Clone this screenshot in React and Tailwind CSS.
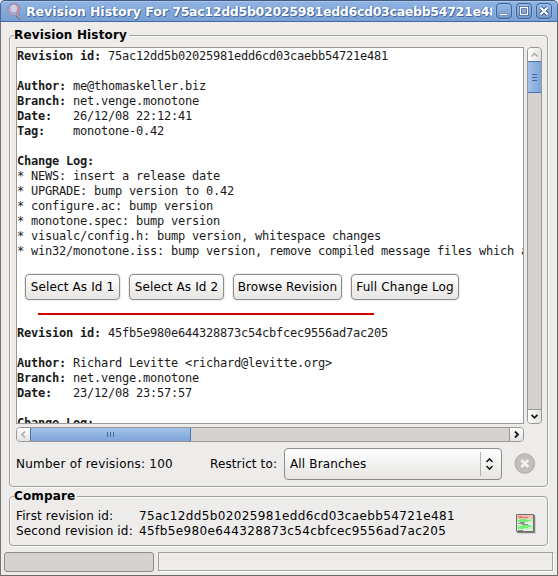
import React from "react";

const SANS = "font-['DejaVu_Sans',sans-serif]";
const MONO = "font-['DejaVu_Sans_Mono',monospace]";

function Line({ label, children }) {
  return (
    <div className="h-[15px] whitespace-pre">
      {label && <b>{label}</b>}
      {children}
    </div>
  );
}

function TitleButton({ children }) {
  return (
    <div className="h-[16px] w-[16px] rounded-[4px] border border-[#3d6397] bg-gradient-to-b from-[#9bbbe6] to-[#7398cb] shadow-[0_0_0_1px_#8db0df]">
      <svg className="block h-[14px] w-[14px]" viewBox="0 0 14 14" fill="none">
        {children}
      </svg>
    </div>
  );
}

function PushButton({ className, children }) {
  return (
    <button
      className={`${className} h-[26px] shrink-0 whitespace-nowrap rounded-[4px] border border-[#8f8b88] bg-gradient-to-b from-white to-[#e6e5e3] text-center text-[12px] leading-[23px] text-black shadow-[0_0_0_1px_#edeceb]`}
    >
      {children}
    </button>
  );
}

function GroupBox({ title, titleWidth, className, children }) {
  return (
    <fieldset className={`relative rounded-[4px] border border-[#a3a19e] shadow-[inset_1px_1px_0_#fafafa,1px_1px_0_#fafafa] ${className}`}>
      <div className={`absolute -top-[9px] left-[4px] h-[16px] ${titleWidth} whitespace-nowrap bg-[#edeceb] text-[12px] font-bold leading-[16px] tracking-[0.15px]`}>
        {title}
      </div>
      {children}
    </fieldset>
  );
}

export default function App() {
  return (
    <div className={`flex h-[576px] w-[558px] flex-col overflow-hidden bg-[#edeceb] text-[12px] text-black ${SANS}`}>
      <header className="flex h-[22px] shrink-0 items-center rounded-t-[5px] border border-b-[#456a9f] border-l-[#4c6791] border-r-[#4c6791] border-t-[#435a7f] bg-gradient-to-b from-[#8fb3e3] to-[#789fd4] shadow-[inset_0_1px_0_#a8c5ee]">
        <svg className="ml-[5px] h-[18px] w-[18px] shrink-0" viewBox="0 0 18 18" fill="none">
          <path d="M10 12l4.500 4.500" stroke="#6f7480" strokeWidth="3.400" />
          <path d="M10 11.500l4.500 4.500" stroke="#b9bdc5" strokeWidth="1.300" />
          <circle cx="8" cy="7.500" r="6.200" fill="#a9a8d0" stroke="#9c8fae" strokeWidth="1.300" />
          <path d="M9 2a5.500 5.500 0 014.500 5.500 5.500 5.500 0 01-3 4.800z" fill="#b98fa5" />
          <ellipse cx="7.800" cy="6.500" rx="3.200" ry="3.800" fill="#d0cfe4" />
        </svg>
        <div className="ml-[2px] h-[20px] w-[466px] overflow-hidden whitespace-pre text-[12.5px] font-bold leading-[21px] text-white [text-shadow:1px_1px_0_#44699e,-1px_0_0_#5c82b8]">
          <span className="tracking-[-0.02px]">Revision History For </span>
          <span className="tracking-[-0.28px]">75ac12dd5b02025981edd6cd03caebb54721e481</span>
        </div>
        <div className="ml-[4px] flex gap-[4px]">
          <TitleButton>
            <path d="M2.500 9.500h8v2h-8z" fill="#fff" stroke="#456a9f" strokeWidth=".6" />
          </TitleButton>
          <TitleButton>
            <path d="M3.5 3.5h7v7h-7z" stroke="#365b90" strokeWidth="3" />
            <path d="M3.5 3.5h7v7h-7z" stroke="#f5f8fd" strokeWidth="1.4" />
          </TitleButton>
          <TitleButton>
            <path d="M3.5 3.5l7 7m0-7l-7 7" stroke="#365b90" strokeWidth="4" />
            <path d="M3.5 3.5l7 7m0-7l-7 7" stroke="#fff" strokeWidth="2.2" />
          </TitleButton>
        </div>
      </header>

      <main className="flex flex-1 flex-col border-b border-l border-r border-b-[#6c6a68] border-l-[#777573] border-r-[#6c6a68] px-[8px] pt-[13px]">
        <GroupBox title="Revision History" titleWidth="w-[115px]" className="h-[452px] w-[539px] shrink-0 pl-[6px] pt-[11px]">
          <div className="flex gap-[3px]">
            <div className={`h-[377px] w-[508px] overflow-hidden border border-[#9b9894] bg-white pt-px text-[12px] leading-[15px] tracking-[-0.224px] text-[#1a1a1a] ${MONO}`}>
              <Line label="Revision id: ">75ac12dd5b02025981edd6cd03caebb54721e481</Line>
              <Line />
              <Line label="Author: ">me@thomaskeller.biz</Line>
              <Line label="Branch: ">net.venge.monotone</Line>
              <Line label="Date:   ">26/12/08 22:12:41</Line>
              <Line label="Tag:    ">monotone-0.42</Line>
              <Line />
              <Line label="Change Log:" />
              <Line>* NEWS: insert a release date</Line>
              <Line>* UPGRADE: bump version to 0.42</Line>
              <Line>* configure.ac: bump version</Line>
              <Line>* monotone.spec: bump version</Line>
              <Line>* visualc/config.h: bump version, whitespace changes</Line>
              <Line>* win32/monotone.iss: bump version, remove compiled message files which are</Line>
              <div className={`ml-[8px] mt-[15px] flex ${SANS}`}>
                <PushButton className="mr-[9px] w-[95px] tracking-[0.13px]">Select As Id 1</PushButton>
                <PushButton className="mr-[9px] w-[95px] tracking-[0.13px]">Select As Id 2</PushButton>
                <PushButton className="mr-[9px] w-[109px] tracking-[0.13px]">Browse Revision</PushButton>
                <PushButton className="w-[108px] tracking-[0.13px]">Full Change Log</PushButton>
              </div>
              <div className="mb-[11px] ml-[21px] mt-[13px] h-[2px] w-[336px] bg-[#d40000]" />
              <Line label="Revision id: ">45fb5e980e644328873c54cbfcec9556ad7ac205</Line>
              <Line />
              <Line label="Author: ">Richard Levitte &lt;richard@levitte.org&gt;</Line>
              <Line label="Branch: ">net.venge.monotone</Line>
              <Line label="Date:   ">23/12/08 23:57:57</Line>
              <Line />
              <Line label="Change Log:" />
            </div>

            <div className="flex h-[377px] w-[15px] flex-col overflow-hidden rounded-[4px] border border-[#9b9894] bg-[#d4d3d1]">
              <div className="h-[13px] bg-gradient-to-r from-white to-[#e3e2e0]">
                <svg className="h-[13px] w-[13px]" viewBox="0 0 13 13" fill="none">
                  <path d="M3.5 8.5l3-3 3 3" stroke="#aaa7a4" strokeWidth="1.5" />
                </svg>
              </div>
              <div className="-mx-px flex h-[32px] flex-col items-center justify-center gap-[2px] border border-[#4d76ae] bg-gradient-to-r from-[#a3c1ea] to-[#7ea4d8]">
                <i className="h-px w-[5px] bg-[#44699e]" />
                <i className="h-px w-[5px] bg-[#44699e]" />
                <i className="h-px w-[5px] bg-[#44699e]" />
              </div>
              <div className="mt-auto h-[14px] border-t border-[#9b9894] bg-gradient-to-r from-white to-[#e3e2e0]">
                <svg className="h-[13px] w-[13px]" viewBox="0 0 13 13" fill="none">
                  <path d="M3.5 4.8l3 3 3-3" stroke="#1a1a1a" strokeWidth="1.8" />
                </svg>
              </div>
            </div>
          </div>

          <div className="mt-[3px] flex h-[15px] w-[508px] overflow-hidden rounded-[4px] border border-[#9b9894] bg-[#d4d3d1]">
            <div className="w-[13px] bg-gradient-to-b from-white to-[#e3e2e0]">
              <svg className="h-[13px] w-[13px]" viewBox="0 0 13 13" fill="none">
                <path d="M8 3.5l-3 3 3 3" stroke="#aaa7a4" strokeWidth="1.5" />
              </svg>
            </div>
            <div className="-my-px flex w-[161px] items-center justify-center gap-[2px] border border-[#4d76ae] bg-gradient-to-b from-[#a3c1ea] to-[#7ea4d8]">
              <i className="h-[5px] w-px bg-[#44699e]" />
              <i className="h-[5px] w-px bg-[#44699e]" />
              <i className="h-[5px] w-px bg-[#44699e]" />
            </div>
            <div className="ml-auto w-[14px] border-l border-[#9b9894] bg-gradient-to-b from-white to-[#e3e2e0]">
              <svg className="h-[13px] w-[13px]" viewBox="0 0 13 13" fill="none">
                <path d="M5 3.5l3 3-3 3" stroke="#1a1a1a" strokeWidth="1.8" />
              </svg>
            </div>
          </div>

          <div className="mt-[6px] flex h-[32px] items-center">
            <span className="w-[194px] whitespace-nowrap tracking-[0.23px]">Number of revisions: 100</span>
            <span className="w-[74px] whitespace-nowrap tracking-[0.12px]">Restrict to:</span>
            <div className="flex h-[32px] w-[218px] items-center rounded-[4px] border border-[#8f8b88] bg-gradient-to-b from-white to-[#e6e5e3] pl-[5px]">
              <span className="flex-1 whitespace-nowrap tracking-[0.15px]">All Branches</span>
              <div className="h-[24px] w-px bg-[#b5b3b0]" />
              <svg className="mx-[2px] h-[16px] w-[16px]" viewBox="0 0 16 16" fill="none" stroke="#1a1a1a" strokeWidth="1.6">
                <path d="M3.500 6l3-3 3 3M3.500 10l3 3 3-3" />
              </svg>
            </div>
            <svg className="ml-[12px] h-[22px] w-[22px]" viewBox="0 0 22 22" fill="none">
              <circle cx="10.800" cy="10.500" r="9.800" fill="#c2bebc" stroke="#aeaaa8" />
              <path d="M7.300 7l7 7m0-7l-7 7" stroke="#f4f3f2" strokeWidth="2.600" />
            </svg>
          </div>
        </GroupBox>

        <GroupBox title="Compare" titleWidth="w-[63px]" className="mt-[9px] flex h-[50px] w-[539px] shrink-0 pl-[6px] pt-[12px]">
          <div className="w-[123px] whitespace-nowrap leading-[15px]">
            <div className="tracking-[0.13px]">First revision id:</div>
            <div className="tracking-[0.16px]">Second revision id:</div>
          </div>
          <div className="w-[376px] whitespace-nowrap leading-[15px] tracking-[0.38px]">
            <div>75ac12dd5b02025981edd6cd03caebb54721e481</div>
            <div>45fb5e980e644328873c54cbfcec9556ad7ac205</div>
          </div>
          <svg className="mt-[4px] h-[21px] w-[21px]" viewBox="0 0 21 21">
            <path d="M3 3h17.500v17.500H3z" fill="#bbb9b7" />
            <path d="M2 2h18v18H2z" fill="#83817e" />
            <path d="M1.500 1.500h17v17h-17z" fill="#e8ebe4" stroke="#6c6e69" />
            <path d="M2 2h16v4H2z" fill="#f6bcb8" />
            <path d="M3 3h4v1H3zM4 4h9v1H4z" fill="#ee7771" />
            <path d="M2 6h16v3H2zM2 12h16v4H2z" fill="#bdf3b9" />
            <path d="M5 6h7v1H5zM3 7h13v1H3zM3 8h10v1H3zM8 12h8v1H8zM4 13h12v1H4zM3 14h10v1H3zM3 15h6v1H3z" fill="#76f276" />
            <path d="M5 9h5v1H5zM3 10h6v1H3zM7 11h6v1H7zM3 17h5v1H3z" fill="#8b8d89" />
          </svg>
        </GroupBox>

        <footer className="-mx-[5px] mt-[6px] flex h-[20px] shrink-0 gap-[4px]">
          <div className="w-[150px] rounded-[3px] border border-[#8f8d8b] bg-[#d4d3d1]" />
          <div className="flex-1 border border-b-white border-l-[#a3a19e] border-r-white border-t-[#a3a19e] bg-[#edeceb] shadow-[inset_0_-1px_0_#a3a19e,inset_-1px_0_0_#a3a19e]" />
        </footer>
      </main>
    </div>
  );
}
